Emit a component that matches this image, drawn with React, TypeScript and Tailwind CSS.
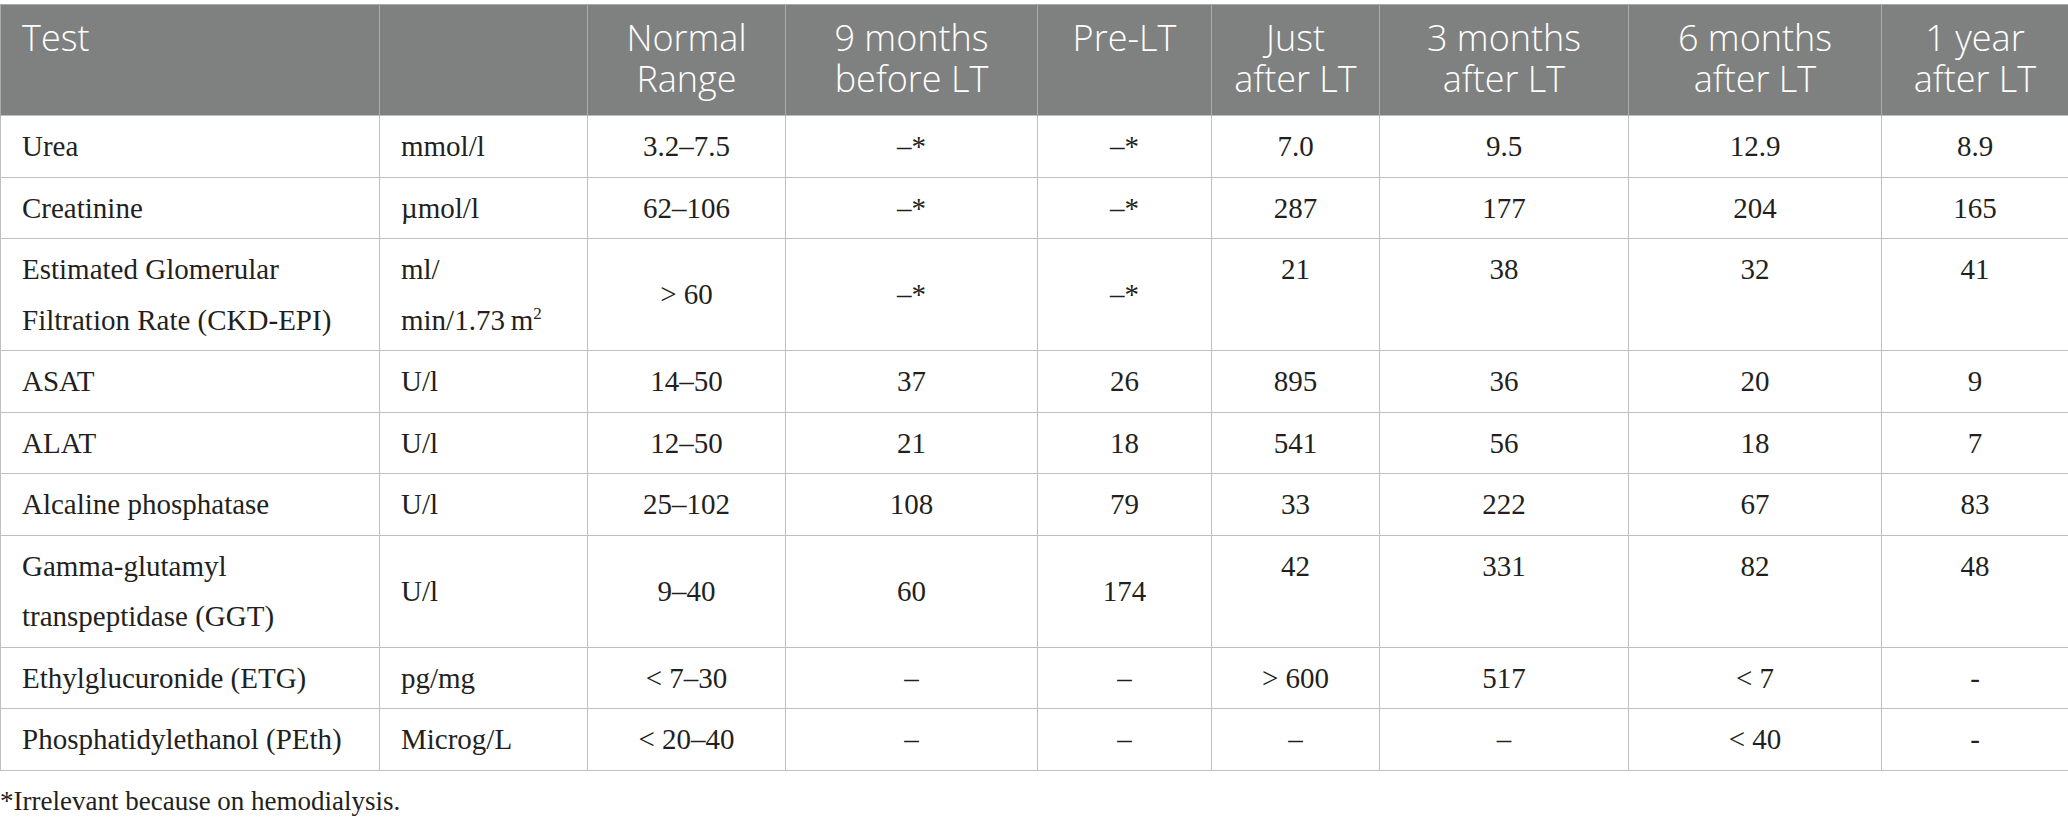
import React from "react"

type Row = {
    test: string[]
    unit: React.ReactNode
    range: string
    values: string[]
}

const headers: string[][] = [
    ["Test"],
    [],
    ["Normal", "Range"],
    ["9 months", "before LT"],
    ["Pre-LT"],
    ["Just", "after LT"],
    ["3 months", "after LT"],
    ["6 months", "after LT"],
    ["1 year", "after LT"],
]

const widths = ["w-[379px]", "w-[208px]", "w-[198px]", "w-[252px]", "w-[174px]", "w-[168px]", "w-[249px]", "w-[253px]", "w-[187px]"]

const rows: Row[] = [
    { test: ["Urea"], unit: "mmol/l", range: "3.2–7.5", values: ["–*", "–*", "7.0", "9.5", "12.9", "8.9"] },
    { test: ["Creatinine"], unit: "µmol/l", range: "62–106", values: ["–*", "–*", "287", "177", "204", "165"] },
    {
        test: ["Estimated Glomerular", "Filtration Rate (CKD-EPI)"],
        unit: (
            <>
                ml/
                <br />
                min/1.73&#8201;m<sup className="text-[17px] leading-none relative -top-[11px] align-baseline">2</sup>
            </>
        ),
        range: "> 60",
        values: ["–*", "–*", "21", "38", "32", "41"],
    },
    { test: ["ASAT"], unit: "U/l", range: "14–50", values: ["37", "26", "895", "36", "20", "9"] },
    { test: ["ALAT"], unit: "U/l", range: "12–50", values: ["21", "18", "541", "56", "18", "7"] },
    { test: ["Alcaline phosphatase"], unit: "U/l", range: "25–102", values: ["108", "79", "33", "222", "67", "83"] },
    {
        test: ["Gamma-glutamyl", "transpeptidase (GGT)"],
        unit: "U/l",
        range: "9–40",
        values: ["60", "174", "42", "331", "82", "48"],
    },
    { test: ["Ethylglucuronide (ETG)"], unit: "pg/mg", range: "< 7–30", values: ["–", "–", "> 600", "517", "< 7", "-"] },
    { test: ["Phosphatidylethanol (PEth)"], unit: "Microg/L", range: "< 20–40", values: ["–", "–", "–", "–", "< 40", "-"] },
]

const cell = "border border-[#bfbfbf] py-[5px] leading-[50.5px]"

const App = () => {
    return (
        <div className="w-[2068px] h-[823px] bg-white text-[#231f20] pt-[4px] font-['Liberation_Serif',serif] text-[29px]">
            <table className="w-[2068px] table-fixed border-collapse">
                <colgroup>
                    {widths.map((w, i) => (
                        <col key={i} className={w} />
                    ))}
                </colgroup>
                <thead>
                    <tr className="bg-[#7f8180] text-white font-['Open_Sans',sans-serif] font-light text-[36px] leading-[41px]">
                        {headers.map((h, i) => (
                            <th
                                key={i}
                                className={`h-[111px] align-top pt-[12px] font-light border-x border-t border-[#a9abaa] ${i === 0 ? "text-left pl-[21px]" : "text-center"}`}
                            >
                                {h.map((line, j) => (
                                    <div key={j}>{line}</div>
                                ))}
                            </th>
                        ))}
                    </tr>
                </thead>
                <tbody>
                    {rows.map((r, i) => (
                        <tr key={i}>
                            <td className={`${cell} align-top pl-[21px] text-left`}>
                                {r.test.map((t, j) => (
                                    <div key={j}>{t}</div>
                                ))}
                            </td>
                            <td className={`${cell} align-middle pl-[21px] text-left`}>{r.unit}</td>
                            <td className={`${cell} align-middle text-center`}>{r.range}</td>
                            {r.values.map((v, j) => (
                                <td key={j} className={`${cell} text-center ${j < 2 ? "align-middle" : "align-top"}`}>
                                    {v}
                                </td>
                            ))}
                        </tr>
                    ))}
                </tbody>
            </table>
            <p className="pt-[12px] leading-[36px] text-[27px]">*Irrelevant because on hemodialysis.</p>
        </div>
    )
}

export default App
